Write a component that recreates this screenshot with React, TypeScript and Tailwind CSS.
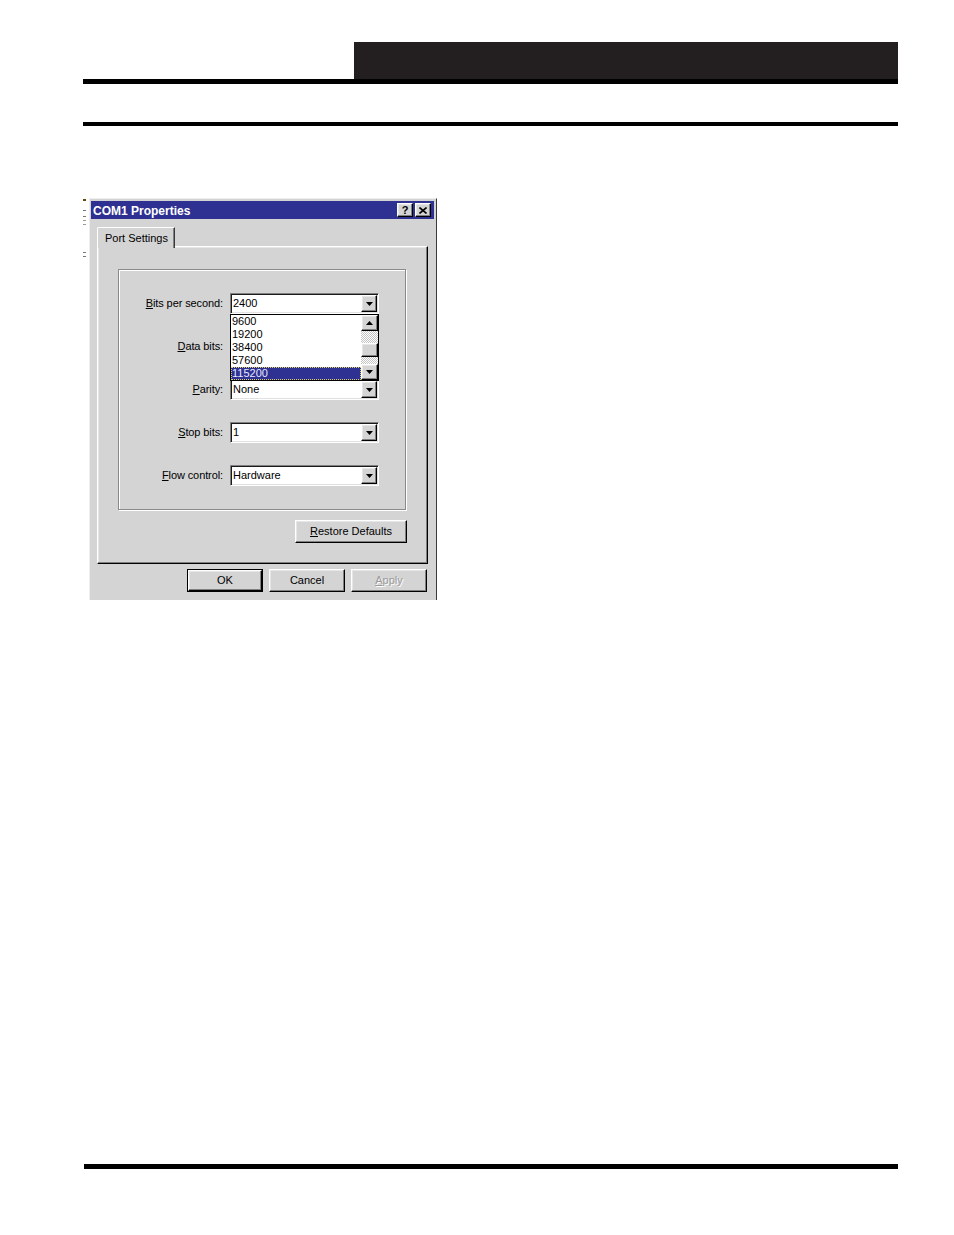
import React from 'react'

// classic raised / sunken bevels
const raised =
  'border border-t-white border-l-white border-r-black border-b-black shadow-[inset_-1px_-1px_0_#808080,inset_1px_1px_0_#e6e6e6]'
const sunken =
  'border border-t-[#808080] border-l-[#808080] border-r-white border-b-white shadow-[inset_1px_1px_0_#1a1a1a,inset_-1px_-1px_0_#e0e0e0]'

function DownArrow() {
  return (
    <svg width="7" height="4" viewBox="0 0 7 4">
      <path d="M0 0h7L3.5 4z" fill="#000" />
    </svg>
  )
}

function UpArrow() {
  return (
    <svg width="7" height="4" viewBox="0 0 7 4">
      <path d="M0 4h7L3.5 0z" fill="#000" />
    </svg>
  )
}

function Combo({ value, children }: { value: string; children?: React.ReactNode }) {
  return (
    <div className={`relative w-[149px] h-[21px] bg-white flex items-center ${sunken}`}>
      <span className="pl-[2px] flex-1 text-[11px] leading-none text-black">{value}</span>
      <div className={`w-[16px] h-[17px] mr-[1px] bg-[#d4d4d4] flex items-center justify-center ${raised}`}>
        <DownArrow />
      </div>
      {children}
    </div>
  )
}

function Label({ text, accel }: { text: string; accel: number }) {
  return (
    <span className="w-[104px] text-right text-[11px] tracking-[-0.1px] text-black whitespace-nowrap">
      {text.slice(0, accel)}
      <span className="underline">{text[accel]}</span>
      {text.slice(accel + 1)}
    </span>
  )
}

function Row({ label, accel, value, children }: { label: string; accel: number; value: string; children?: React.ReactNode }) {
  return (
    <div className="flex items-center gap-[7px]">
      <Label text={label} accel={accel} />
      <Combo value={value}>{children}</Combo>
    </div>
  )
}

function DropList() {
  const items = ['9600', '19200', '38400', '57600', '115200']
  return (
    <div className="absolute left-[-1px] top-[20px] z-20 w-[149px] h-[67px] bg-white border border-black flex">
      <div className="flex-1 flex flex-col">
        {items.map((it) =>
          it === '115200' ? (
            <div key={it} className="h-[13px] bg-[#2e3192] text-[#e8e8ff] outline outline-1 outline-dotted outline-[#e0d060] -outline-offset-1 text-[11px] leading-[13px] pl-[1px]">
              {it}
            </div>
          ) : (
            <div key={it} className="h-[13px] text-[11px] leading-[13px] pl-[1px] text-black">
              {it}
            </div>
          )
        )}
      </div>
      <div className="w-[17px] flex flex-col">
        <div className={`h-[16px] bg-[#d4d4d4] flex items-center justify-center ${raised}`}>
          <UpArrow />
        </div>
        <div className="h-[12px] bg-[image:repeating-conic-gradient(#ffffff_0%_25%,#c4c4c4_0%_50%)] bg-[length:2px_2px]" />
        <div className={`h-[14px] bg-[#d4d4d4] ${raised}`} />
        <div className="h-[7px] bg-[image:repeating-conic-gradient(#ffffff_0%_25%,#c4c4c4_0%_50%)] bg-[length:2px_2px]" />
        <div className={`h-[16px] bg-[#d4d4d4] flex items-center justify-center ${raised}`}>
          <DownArrow />
        </div>
      </div>
    </div>
  )
}

function Button({ children, isDefault = false, disabled = false }: { children: React.ReactNode; isDefault?: boolean; disabled?: boolean }) {
  const inner = (
    <div className={`h-full w-full bg-[#d4d4d4] flex items-center justify-center text-[11px] ${raised} ${disabled ? 'text-[#9a9a9a] [text-shadow:1px_1px_0_#fff]' : 'text-black'}`}>
      {children}
    </div>
  )
  if (isDefault) {
    return <div className="w-[76px] h-[23px] border border-black">{inner}</div>
  }
  return <div className="w-[76px] h-[23px]">{inner}</div>
}

function Dialog() {
  return (
    <div className="flex">
      {/* remains of the window behind */}
      <div className="w-[6px] h-[402px] flex flex-col gap-[3px] pt-[1px]">
        <div className="w-[3px] h-[2px] bg-[#5a4a10]" />
        <div className="w-[3px] h-[1px] bg-[#777] mt-[6px]" />
        <div className="w-[3px] h-[1px] bg-[#777] mt-[2px]" />
        <div className="w-[3px] h-[1px] bg-[#999]" />
        <div className="w-[3px] h-[1px] bg-[#999]" />
        <div className="w-[3px] h-[1px] bg-[#777] mt-[24px]" />
        <div className="w-[3px] h-[1px] bg-[#777]" />
      </div>
      <div className="w-[348px] h-[402px] overflow-hidden bg-[#d4d4d4] border-t border-l border-t-[#eeeeee] border-l-[#eeeeee] border-r border-r-[#3a3a3a] pt-[2px] pl-[1px] pr-[2px]">
        {/* title bar */}
        <div className="h-[18px] bg-[#2e3192] flex items-center pl-[2px] pr-[3px]">
          <span className="flex-1 text-white font-bold text-[12px] leading-none pt-[1px]">COM1 Properties</span>
          <div className="flex gap-[2px]">
            <div className={`w-[16px] h-[14px] bg-[#d4d4d4] flex items-center justify-center text-[11px] font-bold leading-none text-black ${raised}`}>?</div>
            <div className={`w-[16px] h-[14px] bg-[#d4d4d4] flex items-center justify-center ${raised}`}>
              <svg width="8" height="7" viewBox="0 0 8 7">
                <path d="M0.5 0.5L7.5 6.5M7.5 0.5L0.5 6.5" stroke="#000" strokeWidth="1.6" />
              </svg>
            </div>
          </div>
        </div>

        {/* tab */}
        <div className="mt-[8px] pl-[6px] flex">
          <div className="relative z-10 w-[78px] h-[21px] -mb-[2px] bg-[#d4d4d4] border-t border-l border-t-white border-l-white border-r border-r-[#3a3a3a] rounded-tl-[2px] shadow-[inset_-1px_0_0_#808080] flex items-center pl-[7px] text-[11px] text-black">
            Port Settings
          </div>
        </div>

        {/* tab page */}
        <div className={`ml-[6px] w-[331px] h-[318px] bg-[#d4d4d4] pt-[22px] pl-[20px] ${raised}`}>
          <div className="w-[288px] h-[241px] border border-[#8a8a8a] shadow-[1px_1px_0_#fff,inset_1px_1px_0_#fff] pt-[23px] flex flex-col gap-[22px]">
            <Row label="Bits per second:" accel={0} value="2400">
              <DropList />
            </Row>
            <Row label="Data bits:" accel={0} value="" />
            <Row label="Parity:" accel={0} value="None" />
            <Row label="Stop bits:" accel={0} value="1" />
            <Row label="Flow control:" accel={0} value="Hardware" />
          </div>
          <div className="mt-[10px] flex justify-end pr-[20px]">
            <div className="w-[112px] h-[23px]">
              <div className={`h-full w-full bg-[#d4d4d4] flex items-center justify-center text-[11px] text-black ${raised}`}>
                <span className="underline">R</span>estore Defaults
              </div>
            </div>
          </div>
        </div>

        {/* buttons */}
        <div className="mt-[5px] flex justify-end gap-[6px] pr-[7px]">
          <Button isDefault>OK</Button>
          <Button>Cancel</Button>
          <Button disabled>
            <span className="underline">A</span>pply
          </Button>
        </div>
      </div>
    </div>
  )
}

export default function App() {
  return (
    <div className="w-[954px] h-[1235px] bg-white font-['Liberation_Sans',Arial,sans-serif]">
      <div className="pt-[42px] pl-[83px] w-[898px]">
        <div className="flex justify-end">
          <div className="w-[544px] h-[37px] bg-[#231f20]" />
        </div>
        <div className="h-[5px] bg-black" />
        <div className="h-[38px]" />
        <div className="h-[4px] bg-black" />
        <div className="mt-[72px]">
          <Dialog />
        </div>
        <div className="mt-[564px] ml-[1px] h-[5px] bg-black" />
      </div>
    </div>
  )
}
